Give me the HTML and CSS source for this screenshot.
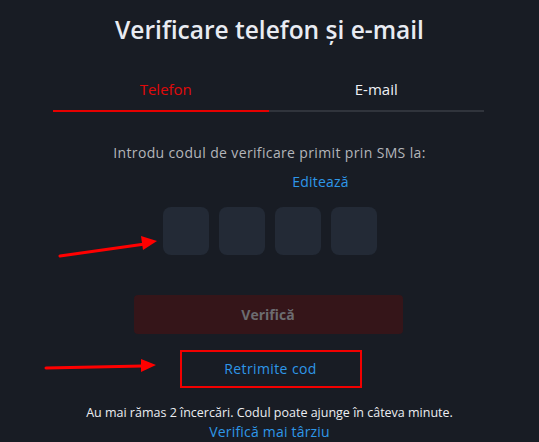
FILE: index.html
```html
<!DOCTYPE html>
<html lang="ro">
<head>
<meta charset="utf-8">
<title>Verificare telefon și e-mail</title>
<link rel="stylesheet" href="styles.css">
</head>
<body>
<main class="page">
  <h1 class="title">Verificare telefon și e-mail</h1>
  <div class="tabs">
    <div class="tab active">Telefon</div>
    <div class="tab">E-mail</div>
  </div>
  <p class="prompt">Introdu codul de verificare primit prin SMS la:</p>
  <div class="edit-row"><a class="link edit">Editează</a></div>
  <div class="code">
    <div class="digit"></div>
    <div class="digit"></div>
    <div class="digit"></div>
    <div class="digit"></div>
  </div>
  <button class="verify" type="button">Verifică</button>
  <div class="resend"><a class="link">Retrimite cod</a></div>
  <p class="note">Au mai rămas 2 încercări. Codul poate ajunge în câteva minute.<br><a class="link">Verifică mai târziu</a></p>
  <svg class="annot" width="539" height="442" viewBox="0 0 539 442">
    <line x1="60" y1="256" x2="145" y2="244" stroke="#f00" stroke-width="3" stroke-linecap="round"/>
    <polygon points="157,241 141,236 143,250" fill="#f00"/>
    <line x1="46" y1="368" x2="143" y2="366" stroke="#f00" stroke-width="3" stroke-linecap="round"/>
    <polygon points="156,365 141,359 141,372" fill="#f00"/>
  </svg>
</main>
</body>
</html>
```

FILE: styles.css
```css
* { box-sizing: border-box; }
html, body { margin: 0; padding: 0; }
body {
  background: #181c24;
  font-family: "Open Sans", "DejaVu Sans", sans-serif;
  color: #e6e8ee;
  width: 539px;
  height: 442px;
  overflow: hidden;
}
.page {
  position: relative;
  display: flex;
  flex-direction: column;
  align-items: center;
  padding-top: 13px;
  height: 442px;
}
.title {
  margin: 0;
  font-size: 24.5px;
  font-weight: 600;
  line-height: 34px;
  color: #e8ebf2;
}
.tabs {
  display: flex;
  width: 431px;
  margin-top: 32px;
  margin-left: -2px;
}
.tab {
  flex: 1;
  text-align: center;
  font-size: 15px;
  line-height: 20px;
  padding-bottom: 11px;
  border-bottom: 2px solid #30343c;
  color: #eef0f4;
}
.tab.active {
  color: #e00a0a;
  border-bottom-color: #e60000;
  text-indent: 10px;
}
.prompt {
  margin: 31px 0 0;
  font-size: 14px;
  line-height: 20px;
  letter-spacing: 0.36px;
  color: #b3b5ba;
}
.edit-row {
  width: 100%;
  display: flex;
  justify-content: center;
  padding-left: 102px;
  margin-top: 9px;
}
.link {
  color: #2e97e8;
  font-size: 14px;
  line-height: 20px;
  letter-spacing: 0.2px;
  cursor: pointer;
}
.code {
  display: flex;
  gap: 10px;
  margin-top: 15px;
}
.digit {
  width: 46px;
  height: 48px;
  border-radius: 8px;
  background: #232a36;
}
.verify {
  margin-top: 40px;
  width: 269px;
  height: 39px;
  border: 0;
  border-radius: 4px;
  background: #351519;
  color: #6c6c70;
  font-family: inherit;
  font-size: 14px;
  font-weight: 700;
  margin-left: -3px;
}
.resend {
  margin-top: 16px;
  width: 182px;
  height: 38px;
  border: 2px solid #f20000;
  display: flex;
  align-items: center;
  justify-content: center;
  margin-left: 2px;
}
.resend .link { letter-spacing: 0.4px; }
.note {
  margin: 16px 0 0;
  text-align: center;
  font-size: 12.5px;
  line-height: 18px;
  color: #eceef2;
}
.note .link { font-size: 14px; }
.annot {
  position: absolute;
  left: 0;
  top: 0;
  pointer-events: none;
}
```
